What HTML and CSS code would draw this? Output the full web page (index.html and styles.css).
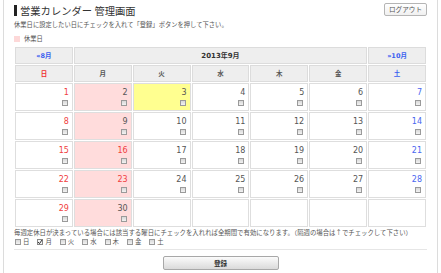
FILE: index.html
```html
<!DOCTYPE html>
<html lang="ja">
<head>
<meta charset="utf-8">
<title>営業カレンダー 管理画面</title>
<link rel="stylesheet" href="styles.css">
</head>
<body>
<div class="wrap">
  <header class="top">
    <h1 class="title">営業カレンダー 管理画面</h1>
    <button class="logout" type="button">ログアウト</button>
  </header>
  <p class="lead">休業日に設定したい日にチェックを入れて「登録」ボタンを押して下さい。</p>
  <div class="legend"><span class="swatch"></span>休業日</div>
  <table class="cal">
    <thead>
      <tr class="nav">
        <th><a class="navlink" href="#">«8月</a></th>
        <th colspan="5" class="month">2013年9月</th>
        <th><a class="navlink" href="#">»10月</a></th>
      </tr>
      <tr class="wk">
        <th class="sun">日</th><th>月</th><th>火</th><th>水</th><th>木</th><th>金</th><th class="sat">土</th>
      </tr>
    </thead>
    <tbody>
      <tr>
        <td><span class="num red">1</span><span class="cb"></span></td>
        <td class="off"><span class="num">2</span><span class="cb"></span></td>
        <td class="today"><span class="num">3</span><span class="cb"></span></td>
        <td><span class="num">4</span><span class="cb"></span></td>
        <td><span class="num">5</span><span class="cb"></span></td>
        <td><span class="num">6</span><span class="cb"></span></td>
        <td><span class="num blue">7</span><span class="cb"></span></td>
      </tr>
      <tr>
        <td><span class="num red">8</span><span class="cb"></span></td>
        <td class="off"><span class="num">9</span><span class="cb"></span></td>
        <td><span class="num">10</span><span class="cb"></span></td>
        <td><span class="num">11</span><span class="cb"></span></td>
        <td><span class="num">12</span><span class="cb"></span></td>
        <td><span class="num">13</span><span class="cb"></span></td>
        <td><span class="num blue">14</span><span class="cb"></span></td>
      </tr>
      <tr>
        <td><span class="num red">15</span><span class="cb"></span></td>
        <td class="off"><span class="num red">16</span><span class="cb"></span></td>
        <td><span class="num">17</span><span class="cb"></span></td>
        <td><span class="num">18</span><span class="cb"></span></td>
        <td><span class="num">19</span><span class="cb"></span></td>
        <td><span class="num">20</span><span class="cb"></span></td>
        <td><span class="num blue">21</span><span class="cb"></span></td>
      </tr>
      <tr>
        <td><span class="num red">22</span><span class="cb"></span></td>
        <td class="off"><span class="num red">23</span><span class="cb"></span></td>
        <td><span class="num">24</span><span class="cb"></span></td>
        <td><span class="num">25</span><span class="cb"></span></td>
        <td><span class="num">26</span><span class="cb"></span></td>
        <td><span class="num">27</span><span class="cb"></span></td>
        <td><span class="num blue">28</span><span class="cb"></span></td>
      </tr>
      <tr>
        <td><span class="num red">29</span><span class="cb"></span></td>
        <td class="off"><span class="num">30</span><span class="cb"></span></td>
        <td></td><td></td><td></td><td></td><td></td>
      </tr>
    </tbody>
  </table>
  <p class="note">毎週定休日が決まっている場合には該当する曜日にチェックを入れれば全期間で有効になります。（隔週の場合は↑でチェックして下さい）</p>
  <div class="weekly">
    <label class="opt"><span class="cb"></span>日</label>
    <label class="opt"><span class="cb checked"><svg viewBox="0 0 6 6" width="6" height="6"><path d="M1 3 L2.5 4.6 L5 1" fill="none" stroke="#333" stroke-width="1"/></svg></span>月</label>
    <label class="opt"><span class="cb"></span>火</label>
    <label class="opt"><span class="cb"></span>水</label>
    <label class="opt"><span class="cb"></span>木</label>
    <label class="opt"><span class="cb"></span>金</label>
    <label class="opt"><span class="cb"></span>土</label>
  </div>
  <hr class="rule">
  <div class="actions"><button class="submit" type="button">登録</button></div>
</div>
</body>
</html>
```
FILE: styles.css
```css
html, body {
  margin: 0;
  padding: 0;
  background: #fff;
  overflow: hidden;
}
body {
  font-family: "DejaVu Sans", "Noto Sans CJK JP", sans-serif;
  color: #555;
}
.wrap {
  margin: 0 3px;
  border-left: 1px solid #dcdcdc;
  border-right: 1px solid #dcdcdc;
  padding: 3px 10px 0;
  height: 270px;
}
.top {
  display: flex;
  justify-content: space-between;
  align-items: flex-start;
  height: 13px;
}
.title {
  margin: 2px 0 0;
  border-left: 3px solid #222;
  padding-left: 3px;
  font-family: "Noto Sans CJK JP", sans-serif;
  font-weight: normal;
  font-size: 10.3px;
  line-height: 11px;
  height: 11px;
  color: #333;
  white-space: nowrap;
}
.logout {
  height: 13px;
  width: 43px;
  padding: 0;
  border: 1px solid #b5b5b5;
  border-radius: 2px;
  background: linear-gradient(#fff, #f0f0f0);
  font-family: "Noto Sans CJK JP", sans-serif;
  font-size: 6.6px;
  color: #555;
  line-height: 11px;
}
.lead {
  margin: 5px 0 0;
  font-family: "Noto Sans CJK JP", sans-serif;
  font-size: 6.3px;
  line-height: 8px;
  height: 8px;
  color: #555;
  white-space: nowrap;
}
.legend {
  margin-top: 6px;
  display: flex;
  align-items: center;
  height: 8px;
  font-family: "Noto Sans CJK JP", sans-serif;
  font-size: 6.3px;
  line-height: 8px;
  color: #555;
}
.swatch {
  width: 6px;
  height: 6px;
  background: #fdd8d8;
  margin-right: 4px;
}
.cal {
  margin-top: 3px;
  width: 100%;
  border-collapse: separate;
  border-spacing: 1px;
  table-layout: fixed;
  font-size: 0;
  line-height: 0;
}
.cal th {
  height: 17px;
  box-sizing: border-box;
  padding: 0;
  background: #eeeeee;
  border: 1px solid #dcdcdc;
  font-size: 6.5px;
  line-height: 8px;
  font-weight: bold;
  color: #555;
  text-align: center;
  vertical-align: middle;
}
.cal .month {
  font-size: 7px;
  color: #333;
}
.navlink {
  color: #3a5ef0;
  text-decoration: none;
  font-size: 6.5px;
}
.cal th.sun { color: #f03030; }
.cal th.sat { color: #3a5ef0; }
.cal td {
  height: 28px;
  box-sizing: border-box;
  padding: 5px 3px 0 0;
  border: 1px solid #dedede;
  vertical-align: top;
  text-align: right;
  background: #fff;
}
.cal td.off { background: #ffdcdc; }
.cal td.today { background: #ffff90; }
.num {
  display: block;
  font-size: 8px;
  line-height: 8px;
  height: 8px;
  color: #555;
}
.num.red { color: #f04040; }
.num.blue { color: #4a66f0; }
.cb {
  display: inline-block;
  box-sizing: border-box;
  width: 6px;
  height: 6px;
  border: 1px solid #9a9a9a;
  background: linear-gradient(#d8d8d8, #f2f2f2);
  vertical-align: top;
}
.cal .cb {
  display: block;
  margin: 3px 1px 0 auto;
}
.cb.checked {
  background: #f4f4f4;
  border-color: #888;
  position: relative;
}
.cb.checked svg {
  position: absolute;
  left: -1px;
  top: -1px;
}
.note {
  margin: 1px 0 0;
  font-family: "Noto Sans CJK JP", sans-serif;
  font-size: 6.4px;
  line-height: 8px;
  height: 8px;
  color: #555;
  white-space: nowrap;
}
.weekly {
  margin-top: 1px;
  display: flex;
  gap: 8px;
  height: 8px;
  padding-left: 1px;
  font-family: "Noto Sans CJK JP", sans-serif;
  font-size: 6.4px;
  line-height: 8px;
  color: #555;
}
.opt {
  display: flex;
  align-items: center;
  gap: 2px;
}
.rule {
  margin: 3px 0 0;
  border: 0;
  border-top: 1px solid #e6e6e6;
  height: 0;
}
.actions {
  display: flex;
  justify-content: center;
  margin-top: 6px;
}
.submit {
  width: 116px;
  height: 14px;
  padding: 0;
  border: 1px solid #a8a8a8;
  border-radius: 2px;
  background: linear-gradient(#fbfbfb, #dadada);
  font-family: "Noto Sans CJK JP", sans-serif;
  font-size: 6.5px;
  line-height: 12px;
  font-weight: bold;
  color: #333;
}
```
